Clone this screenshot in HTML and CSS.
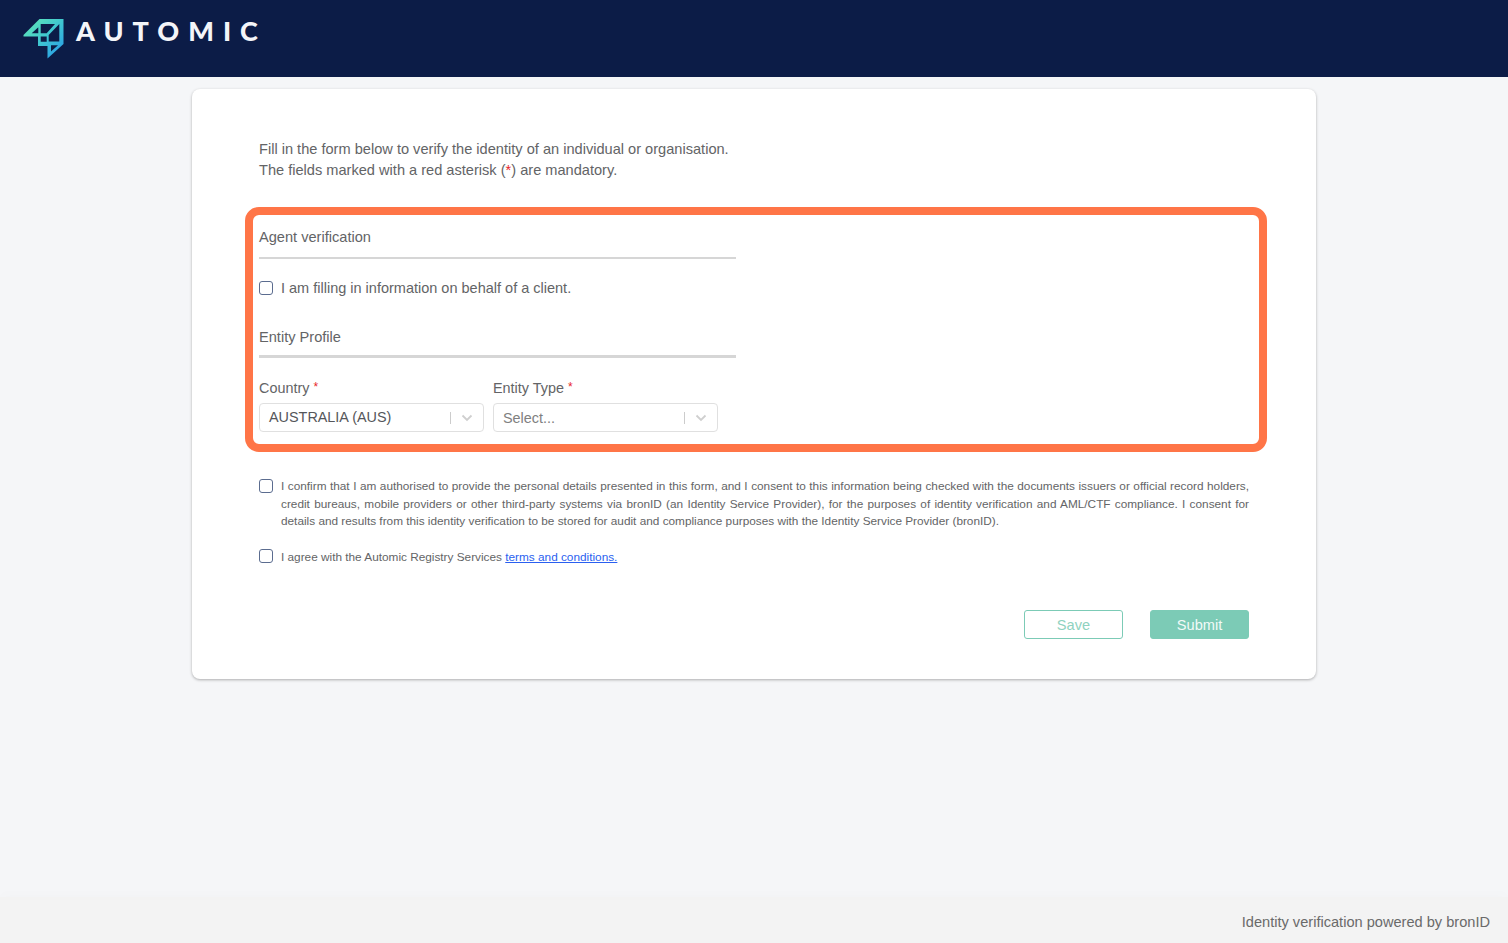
FILE: index.html
```html
<!DOCTYPE html>
<html lang="en">
<head>
<meta charset="utf-8">
<title>Automic identity verification</title>
<link rel="stylesheet" href="styles.css">
</head>
<body>
<header class="topbar">
  <svg class="logo-mark" width="42" height="42" viewBox="0 0 42 42" aria-hidden="true">
    <defs>
      <linearGradient id="lg" gradientUnits="userSpaceOnUse" x1="4" y1="4" x2="36" y2="38">
        <stop offset="0" stop-color="#5fe6b8"/>
        <stop offset="0.5" stop-color="#3fc6d0"/>
        <stop offset="1" stop-color="#2a9fe8"/>
      </linearGradient>
    </defs>
    <path fill="url(#lg)" fill-rule="evenodd" d="M0.500 17 16.500 1H40.500V26L24.500 40.500V28H15V18.500H0.500ZM8.700 15.300H15.300V9.300ZM17.700 15.300H23.700L32 6H17.700ZM25.700 17 36.300 6V23.500H25.700ZM17.700 18.500V23.700H23.700V18.500ZM28 27.300V33.500L35 27.300Z"/>
  </svg>
  <span class="wordmark">AUTOMIC</span>
</header>
<main class="page">
  <section class="card">
    <p class="intro">Fill in the form below to verify the identity of an individual or organisation.<br>The fields marked with a red asterisk (<span class="req">*</span>) are mandatory.</p>
    <div class="highlight">
      <div class="column">
        <h2 class="section-title">Agent verification</h2>
        <label class="check-row agent"><span class="box"></span><span>I am filling in information on behalf of a client.</span></label>
        <h2 class="section-title entity">Entity Profile</h2>
        <div class="fields">
          <div class="field">
            <div class="field-label">Country <span class="req">*</span></div>
            <div class="select">
              <span class="value">AUSTRALIA (AUS)</span>
              <span class="sep"></span>
              <svg class="chev" width="12" height="8" viewBox="0 0 12 8" aria-hidden="true"><path d="M1.5 1.500 6 6l4.500-4.500" fill="none" stroke="#cfcfcf" stroke-width="1.800"/></svg>
            </div>
          </div>
          <div class="field">
            <div class="field-label">Entity Type <span class="req">*</span></div>
            <div class="select">
              <span class="placeholder">Select...</span>
              <span class="sep"></span>
              <svg class="chev" width="12" height="8" viewBox="0 0 12 8" aria-hidden="true"><path d="M1.5 1.500 6 6l4.500-4.500" fill="none" stroke="#cfcfcf" stroke-width="1.800"/></svg>
            </div>
          </div>
        </div>
      </div>
    </div>
    <label class="check-row consent"><span class="box"></span><span class="consent-text">I confirm that I am authorised to provide the personal details presented in this form, and I consent to this information being checked with the documents issuers or official record holders, credit bureaus, mobile providers or other third-party systems via bronID (an Identity Service Provider), for the purposes of identity verification and AML/CTF compliance. I consent for details and results from this identity verification to be stored for audit and compliance purposes with the Identity Service Provider (bronID).</span></label>
    <label class="check-row terms"><span class="box"></span><span>I agree with the Automic Registry Services <a href="#" class="link">terms and conditions.</a></span></label>
    <div class="actions">
      <button class="btn btn-outline" type="button">Save</button>
      <button class="btn btn-solid" type="button">Submit</button>
    </div>
  </section>
</main>
<footer class="footer">Identity verification powered by bronID</footer>
</body>
</html>
```
FILE: styles.css
```css
* { box-sizing: border-box; }
html, body { height: 100%; }
body {
  margin: 0;
  display: flex;
  flex-direction: column;
  height: 943px;
  overflow: hidden;
  background: #f5f6f8;
  color: #636466;
  font-family: "Liberation Sans", Arial, sans-serif;
  font-size: 14.600px;
}
.topbar {
  flex: none;
  height: 77px;
  background: #0c1c47;
  display: flex;
  align-items: flex-start;
  padding: 18px 0 0 23px;
}
.logo-mark { display: block; }
.wordmark {
  margin: -1px 0 0 11px;
  font-family: Lato, "Liberation Sans", sans-serif;
  font-weight: 900;
  font-size: 27px;
  line-height: 28px;
  letter-spacing: 9px;
  color: #f4f5f9;
}
.page {
  flex: 1;
  display: flex;
  justify-content: center;
  padding-top: 12px;
}
.card {
  width: 1124px;
  height: 590px;
  background: #fff;
  border-radius: 8px;
  box-shadow: 0 1px 3px rgba(0, 0, 0, 0.3);
  padding: 50px 67px 0;
}
.intro { margin: 0; line-height: 21px; }
.req { color: #e8262a; }
.highlight {
  margin: 26px -18px 0 -14px;
  height: 245px;
  border: 8px solid #ff7547;
  border-radius: 14px;
  padding: 0 6px;
}
.column { width: 477px; }
.section-title {
  margin: 0;
  height: 44px;
  padding-top: 14px;
  font-size: 14.600px;
  font-weight: 400;
  line-height: 17px;
  border-bottom: 2px solid #d6d6d6;
}
.section-title.entity { height: 43px; border-bottom-width: 3px; }
.check-row { display: flex; align-items: flex-start; }
.box {
  flex: none;
  width: 14px;
  height: 14px;
  margin-right: 8px;
  background: #fff;
  border: 1px solid #5b6c8f;
  border-radius: 3px;
}
.agent { height: 56px; padding-top: 22px; line-height: 15px; font-size: 14.500px; }
.fields { display: flex; gap: 9px; padding-top: 20px; }
.field { width: 225px; }
.field-label { height: 25px; line-height: 18px; font-size: 14.400px; }
.field-label .req { font-size: 12px; vertical-align: 2px; }
.select {
  height: 29px;
  display: flex;
  align-items: center;
  padding: 0 10px 0 9px;
  border: 1px solid #e0e0e0;
  border-radius: 4px;
  background: #fff;
}
.value { flex: 1; font-size: 14.400px; color: #55565a; padding-bottom: 2px; }
.placeholder { flex: 1; font-size: 14.400px; color: #808080; padding-top: 1px; }
.sep { width: 1px; height: 12px; background: #cccccc; margin-right: 10px; }
.chev { display: block; }
.consent { margin: 26px 0 0; font-size: 11.800px; line-height: 17.500px; }
.consent-text { text-align: justify; }
.consent .box { margin-top: 1px; }
.terms { margin-top: 18px; font-size: 11.800px; line-height: 16px; }
.link { color: #2a5ff0; text-decoration: underline; }
.actions { display: flex; justify-content: flex-end; gap: 27px; margin-top: 45px; }
.btn {
  width: 99px;
  height: 29px;
  padding: 1px 0 0;
  border-radius: 3px;
  font-family: inherit;
  font-size: 14.600px;
}
.btn-outline { background: #fff; border: 1px solid #7ccbb6; color: #8fd2c0; }
.btn-solid { background: #7ccbb6; border: 1px solid #7ccbb6; color: #f2faf8; }
.footer {
  flex: none;
  height: 46px;
  background: #f3f3f3;
  box-shadow: 0 -4px 10px rgba(0, 0, 0, 0.012);
  padding: 17px 18px 0 0;
  text-align: right;
  font-size: 14.600px;
  line-height: 17px;
  color: #6a6a6a;
}
```
